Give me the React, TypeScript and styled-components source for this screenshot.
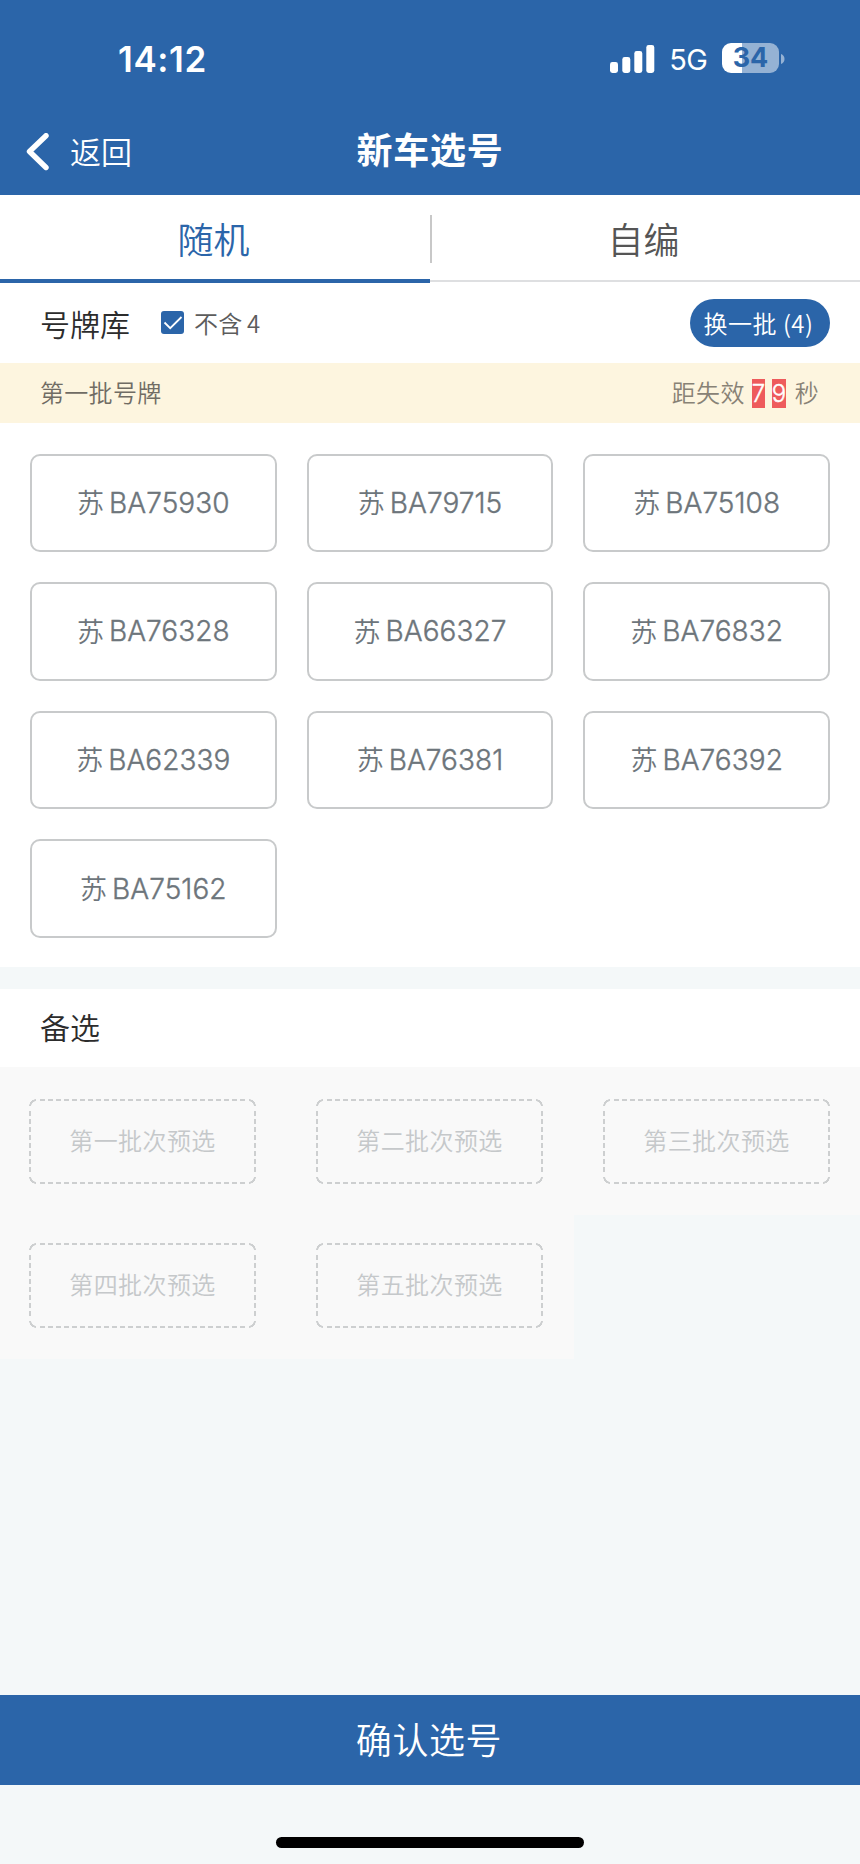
import React from "react";
import styled, { createGlobalStyle } from "styled-components";

const blue = "#2b65a9";
const cjk = `"Noto Sans CJK SC", sans-serif`;

const GlobalStyle = createGlobalStyle`
  * { box-sizing: border-box; }
  body { margin: 0; background: #f4f8f9; }
  button { font: inherit; border: 0; padding: 0; background: none; letter-spacing: inherit; }
`;

const Screen = styled.div`
  display: flex;
  flex-direction: column;
  width: 860px;
  height: 1864px;
  overflow: hidden;
  background: #f4f8f9;
  font-family: Inter, ${cjk};
  font-weight: 350;
  color: #333;
`;

const Header = styled.header`
  height: 195px;
  background: ${blue};
  color: #fff;
`;

const StatusBar = styled.div`
  display: flex;
  align-items: center;
  justify-content: space-between;
  height: 118px;
  padding: 0 75px 0 118px;
`;

const Clock = styled.time`
  margin-top: -1px;
  font-size: 35px;
  font-weight: 600;
  letter-spacing: 0.6px;
`;

const StatusIcons = styled.div`
  display: flex;
  align-items: center;
`;

const Network = styled.span`
  margin: 2px 15px 0 14px;
  font-size: 29px;
  font-weight: 400;
  line-height: 34px;
  letter-spacing: -0.8px;
`;

const Battery = styled.div`
  width: 57px;
  height: 30px;
  margin-top: -2px;
  border-radius: 9px;
  background: linear-gradient(90deg, #fff 20px, #95b2d4 20px);
  color: ${blue};
  font-size: 27px;
  font-weight: 700;
  line-height: 30px;
  text-align: center;
`;

const NavBar = styled.div`
  display: grid;
  grid-template-columns: 1fr auto 1fr;
  align-items: center;
  height: 68px;
`;

const BackButton = styled.button`
  display: flex;
  align-items: center;
  gap: 21px;
  padding-left: 25px;
  color: #fff;
  font-size: 31px;
  line-height: 40px;

  span { margin-top: 2px; }
`;

const Title = styled.h1`
  margin: -2px 0 0;
  font-size: 36px;
  font-weight: 600;
  line-height: 52px;
  letter-spacing: 0.7px;
`;

const Tabs = styled.nav`
  display: grid;
  grid-template-columns: 430px 430px;
  height: 88px;
  background: #fff;
`;

const Tab = styled.button<{ $active?: boolean }>`
  position: relative;
  height: ${(p) => (p.$active ? 88 : 87)}px;
  padding: 7px 3px 0 0;
  border-bottom: ${(p) => (p.$active ? `4px solid ${blue}` : "2px solid #dedfe1")};
  color: ${(p) => (p.$active ? blue : "#555")};
  font-size: 36px;
  line-height: 76px;
`;

const TabDivider = styled.i`
  position: absolute;
  left: 0;
  top: 20px;
  width: 2px;
  height: 48px;
  background: #c8c8c8;
`;

const Toolbar = styled.div`
  display: flex;
  align-items: center;
  height: 80px;
  padding: 2px 30px 0 40px;
  background: #fff;
`;

const Heading = styled.h2`
  margin: 2px 0 0;
  font-size: 30px;
  font-weight: 350;
  line-height: 40px;
  color: #2c2c2c;
`;

const Filter = styled.label`
  display: flex;
  align-items: center;
  gap: 10px;
  margin: 0 auto 3px 31px;
  font-family: ${cjk};
  font-size: 24px;
  line-height: 30px;
  letter-spacing: 0.2px;
  word-spacing: -1px;
  color: #5c5c5c;
`;

const CheckBox = styled.span`
  display: flex;
  width: 23px;
  height: 23px;
  border-radius: 3px;
  background: ${blue};
`;

const Refresh = styled.button`
  width: 140px;
  height: 48px;
  margin-bottom: 2px;
  padding-right: 3px;
  border-radius: 24px;
  background: ${blue};
  color: #fff;
  font-family: ${cjk};
  font-size: 24px;
  line-height: 48px;
  letter-spacing: 0.5px;
`;

const Banner = styled.div`
  display: flex;
  align-items: center;
  justify-content: space-between;
  height: 60px;
  padding: 2px 41px 0 40px;
  background: #fdf5df;
  font-size: 24px;
  line-height: 30px;
  letter-spacing: 0.3px;
  color: #706c64;
`;

const Countdown = styled.div`
  display: flex;
  align-items: center;
  color: #888276;
`;

const Digit = styled.span<{ $w: number }>`
  width: ${(p) => p.$w}px;
  height: 29px;
  margin: -1px 0 0 7px;
  background: #ee5b5c;
  color: #fff;
  line-height: 29px;
  text-align: center;
  letter-spacing: 0;
  -webkit-text-stroke: 0.4px #fff;
  & + & { margin-right: 9px; }
`;

const PlateGrid = styled.div`
  display: grid;
  grid-template-columns: repeat(3, 1fr);
  grid-auto-rows: 98.6px;
  gap: 30px;
  height: 544px;
  padding: 30.5px 30px 0;
  background: #fff;
`;

const Plate = styled.button`
  display: flex;
  align-items: center;
  justify-content: center;
  gap: 5px;
  border: 2px solid #c8cacb;
  border-radius: 10px;
  color: #6d757b;
  font-size: 28px;
`;

const Province = styled.span`
  margin-top: -2px;
  font-size: 27px;
`;

const Serial = styled.span`
  letter-spacing: 0.05px;
  -webkit-text-stroke: 0.4px #6d757b;
`;

const ReserveTitle = styled.div`
  display: flex;
  align-items: center;
  height: 78px;
  margin-top: 22px;
  padding: 0 40px 2px;
  background: #fff;
`;

const ReserveGrid = styled.div`
  display: grid;
  grid-template-columns: 287px 287px 286px;
  grid-template-rows: 148px 144px;
`;

const ReserveCell = styled.div`
  display: flex;
  align-items: flex-end;
  padding: 0 0 31px 29px;
  background: #f9f9f9;
`;

const dash = "#cdcfd0";
const dashes = (to: string) =>
  `repeating-linear-gradient(to ${to}, ${dash} 0 5px, transparent 5px 8px)`;
const arc = (at: string) =>
  `radial-gradient(circle at ${at}, transparent 4.5px, ${dash} 5px 6.5px, transparent 7px)`;

/* Empty pick slot: short 5px dashes on each edge, joined by rounded corners. */
const Slot = styled.div`
  width: 227px;
  height: 85px;
  padding-top: 1px;
  background:
    ${dashes("right")} 50% 0 / 205px 2px,
    ${dashes("right")} 50% 100% / 205px 2px,
    ${dashes("bottom")} 0 50% / 2px 61px,
    ${dashes("bottom")} 100% 50% / 2px 61px,
    ${arc("100% 100%")} 0 0 / 7px 7px,
    ${arc("0 100%")} 100% 0 / 7px 7px,
    ${arc("100% 0")} 0 100% / 7px 7px,
    ${arc("0 0")} 100% 100% / 7px 7px;
  background-repeat: no-repeat;
  color: #c5c8ca;
  font-size: 24px;
  line-height: 84px;
  letter-spacing: 0.4px;
  text-align: center;
`;

const Confirm = styled.button`
  height: 90px;
  margin-top: auto;
  padding: 2px 2px 0 0;
  background: ${blue};
  color: #fff;
  font-size: 36px;
  line-height: 88px;
  letter-spacing: 0.6px;
`;

const HomeArea = styled.footer`
  height: 79px;
  padding-top: 52px;
`;

const HomeIndicator = styled.div`
  width: 308px;
  height: 11px;
  margin: 0 auto;
  border-radius: 6px;
  background: #000;
`;

const plates = [
  "BA75930", "BA79715", "BA75108",
  "BA76328", "BA66327", "BA76832",
  "BA62339", "BA76381", "BA76392",
  "BA75162",
];

const reserves = ["第一批次预选", "第二批次预选", "第三批次预选", "第四批次预选", "第五批次预选"];

const Signal = () => (
  <svg width="45" height="28" viewBox="0 0 45 28" fill="#fff">
    <rect x="0" y="17" width="8" height="11" rx="2.4" />
    <rect x="12.3" y="12" width="8" height="16" rx="2.4" />
    <rect x="24.3" y="6" width="8" height="22" rx="2.4" />
    <rect x="36.3" y="0" width="8" height="28" rx="2.4" />
  </svg>
);

export default function App() {
  return (
    <>
      <GlobalStyle />
      <Screen>
        <Header>
          <StatusBar>
            <Clock>14:12</Clock>
            <StatusIcons>
              <Signal />
              <Network>5G</Network>
              <Battery>34</Battery>
              <svg width="6" height="10" viewBox="0 0 6 10">
                <path d="M2 0c2.300.8 3.500 2.600 3.500 5S4.300 9.200 2 10Z" fill="#95b2d4" />
              </svg>
            </StatusIcons>
          </StatusBar>
          <NavBar>
            <BackButton>
              <svg width="24" height="38" viewBox="0 0 24 38" fill="none" stroke="#fff" strokeWidth="5.400" strokeLinecap="round" strokeLinejoin="round">
                <path d="M21 2.700 4.500 18.500l16.500 16" />
              </svg>
              <span>返回</span>
            </BackButton>
            <Title>新车选号</Title>
            <span />
          </NavBar>
        </Header>

        <Tabs>
          <Tab $active>随机</Tab>
          <Tab>
            <TabDivider />
            自编
          </Tab>
        </Tabs>

        <Toolbar>
          <Heading>号牌库</Heading>
          <Filter>
            <CheckBox>
              <svg width="23" height="23" viewBox="0 0 23 23" fill="none" stroke="#fff" strokeWidth="1.800">
                <path d="m3.500 11.500 5.700 5.700L20.500 6" />
              </svg>
            </CheckBox>
            <span>不含 4</span>
          </Filter>
          <Refresh>换一批 (4)</Refresh>
        </Toolbar>

        <Banner>
          <span>第一批号牌</span>
          <Countdown>
            距失效
            <Digit $w={13}>7</Digit>
            <Digit $w={14}>9</Digit>
            秒
          </Countdown>
        </Banner>

        <PlateGrid>
          {plates.map((p) => (
            <Plate key={p}>
              <Province>苏</Province>
              <Serial>{p}</Serial>
            </Plate>
          ))}
        </PlateGrid>

        <ReserveTitle>
          <Heading>备选</Heading>
        </ReserveTitle>
        <ReserveGrid>
          {reserves.map((r) => (
            <ReserveCell key={r}>
              <Slot>{r}</Slot>
            </ReserveCell>
          ))}
        </ReserveGrid>

        <Confirm>确认选号</Confirm>
        <HomeArea>
          <HomeIndicator />
        </HomeArea>
      </Screen>
    </>
  );
}
